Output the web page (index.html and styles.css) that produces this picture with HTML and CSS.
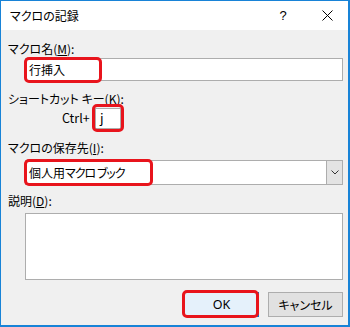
FILE: index.html
```html
<!DOCTYPE html>
<html lang="ja">
<head>
<meta charset="utf-8">
<link rel="stylesheet" href="styles.css">
</head>
<body>
<div class="window">
  <div class="titlebar">
    <span class="title">マクロの記録</span>
    <span class="cap help">?</span>
    <span class="cap close"><svg width="11" height="11" viewBox="0 0 11 11"><path d="M0.5 0.5L10.5 10.5M10.5 0.5L0.5 10.5" stroke="#000" stroke-width="1" fill="none"/></svg></span>
  </div>
  <div class="content">
    <div class="label">マクロ名(<u>M</u>):</div>
    <div class="field name"><span class="val">行挿入</span><span class="mark m1"></span></div>
    <div class="label l2">ショートカット キー(<u>K</u>):</div>
    <div class="shortcut">
      <span class="ctrl">Ctrl+</span>
      <div class="key">j<span class="mark m2"></span></div>
    </div>
    <div class="label l3">マクロの保存先(<u>I</u>):</div>
    <div class="field select"><span class="val">個人用<span class="kana">マクロ ブック</span></span><span class="drop"><svg width="8" height="5" viewBox="0 0 8 5"><path d="M0.5 0.5L4 4L7.5 0.5" stroke="#333" stroke-width="1" fill="none"/></svg></span><span class="mark m3"></span></div>
    <div class="label l4">説明(<u>D</u>):</div>
    <div class="field textarea"></div>
    <div class="buttons">
      <div class="btn ok">OK<span class="mark m4"></span></div>
      <div class="btn cancel">キャンセル</div>
    </div>
  </div>
</div>
</body>
</html>
```
FILE: styles.css
```css
html, body {
  margin: 0;
  padding: 0;
  background: #ffffff;
}
body {
  font-family: "Noto Sans CJK JP", "Noto Sans", sans-serif;
  font-size: 12px;
  line-height: 16px;
  color: #000;
  font-feature-settings: "palt";
}
.window {
  width: 350px;
  height: 327px;
  box-sizing: border-box;
  border-style: solid;
  border-color: #1883d7;
  border-width: 1px 2px 2px 1px;
  display: flex;
  flex-direction: column;
  overflow: hidden;
}
.titlebar {
  height: 29px;
  background: #ffffff;
  display: flex;
  align-items: center;
  padding-left: 9px;
  flex: none;
}
.title {
  flex: 1;
}
.cap {
  display: flex;
  align-items: center;
  justify-content: center;
  height: 29px;
}
.help {
  width: 46px;
  font-family: "Liberation Sans", sans-serif;
  font-size: 13px;
}
.close {
  width: 42px;
}
.content {
  flex: 1;
  background: #f0f0f0;
  padding: 11px 5px 0 7px;
}
.label {
  height: 16px;
}
u {
  text-decoration: underline;
  text-underline-offset: 1px;
}
.field {
  position: relative;
  margin-left: 17px;
  background: #fff;
  border: 1px solid #adadad;
  box-sizing: border-box;
  display: flex;
  align-items: center;
}
.val {
  padding-left: 3px;
}
.kana {
  letter-spacing: -1px;
}
.name {
  margin-top: 1px;
  height: 23px;
}
.l2 {
  margin-top: 10px;
}
.shortcut {
  display: flex;
  align-items: center;
  height: 22px;
  margin-left: 54px;
}
.ctrl {
  width: 33px;
  font-size: 12.5px;
}
.key {
  position: relative;
  width: 26px;
  height: 21px;
  box-sizing: border-box;
  background: #fff;
  border: 1px solid #adadad;
  padding-left: 4px;
  display: flex;
  align-items: center;
  font-size: 13px;
}
.l3 {
  margin-top: 11px;
}
.select {
  margin-top: 4px;
  height: 25px;
}
.drop {
  margin-left: auto;
  width: 16px;
  height: 100%;
  box-sizing: border-box;
  background: #e3e3e3;
  border-left: 1px solid #adadad;
  display: flex;
  align-items: center;
  justify-content: center;
}
.l4 {
  margin-top: 8px;
}
.textarea {
  margin-top: 4px;
  height: 67px;
}
.buttons {
  margin-top: 12px;
  display: flex;
  justify-content: flex-end;
  gap: 9px;
}
.btn {
  position: relative;
  width: 75px;
  height: 25px;
  box-sizing: border-box;
  display: flex;
  align-items: center;
  justify-content: center;
}
.ok {
  background: #e5f1fb;
  border: 1px solid #0078d7;
  font-family: "Noto Sans", sans-serif;
  font-size: 12.5px;
}
.cancel {
  background: #e1e1e1;
  border: 1px solid #adadad;
}
.mark {
  position: absolute;
  box-sizing: border-box;
  border: 3px solid #e8141c;
  border-radius: 5px;
}
.m1 {
  left: -2px;
  top: -2px;
  width: 78px;
  height: 26px;
}
.m2 {
  left: -4px;
  top: -5px;
  width: 32px;
  height: 28px;
}
.m3 {
  left: -2px;
  top: -2px;
  width: 129px;
  height: 27px;
}
.m4 {
  left: -3px;
  top: -3px;
  width: 77px;
  height: 28px;
}
```
